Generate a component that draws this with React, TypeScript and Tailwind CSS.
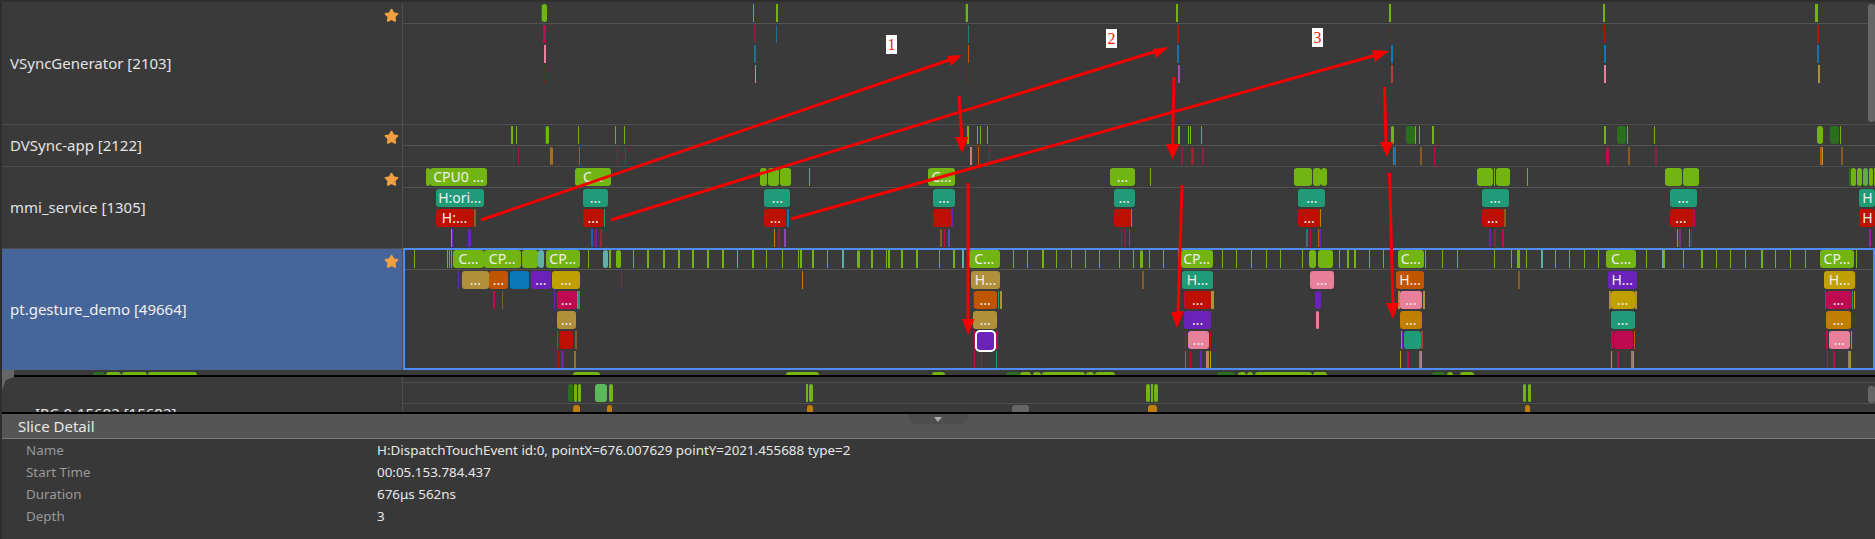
import { Star } from 'lucide-react';

type Slice = [number, number, string, string?];

const CANVAS_LEFT = 403;

const GREEN = '#72b512';
const DARK = '#2a6e1e';
const TEAL = '#1f9c77';
const RED = '#bd1000';
const CRIM = '#c00a50';
const PINK = '#e8809c';
const TAN = '#b0903a';
const ORANGE = '#c05500';
const OCHRE = '#c07f00';
const PURPLE = '#6a22b8';
const BLUE = '#0a78b8';
const YELLOW = '#c0a000';
const AQUA = '#5fb0a8';
const MAROON = '#8a1f4a';
const BROWN = '#8a5a20';

const vsync: Slice[][] = [
    [[540.6, 1, DARK], [542, 5, GREEN], [753, 1, GREEN], [776, 1.5, GREEN], [965, 1, DARK], [966, 2, GREEN], [1176, 2, GREEN], [1389, 2, GREEN], [1603, 2, GREEN], [1815, 2.5, GREEN]],
    [[543, 2.5, CRIM], [754, 1, MAROON], [776, 1, '#1f6f8f'], [968, 1, '#1f7f6f'], [1177, 1.5, RED], [1390.5, 1, '#8f1a10'], [1604, 1, RED], [1817, 2, RED]],
    [[544, 2, PINK], [754, 1.5, '#1f6f8f'], [968, 1, ORANGE], [1177, 2, BLUE], [1390.5, 2, BLUE], [1604, 2, BLUE], [1817, 2, BLUE]],
    [[544.7, 1, '#8f1a10'], [755, 1, PINK], [967, 1, '#7f1a10'], [1178, 2, '#a050b0'], [1391, 2, '#b04040'], [1604, 2, PINK], [1818, 1.5, TAN]],
];

const dvsync: Slice[][] = [
    [[511, 2, GREEN], [516, 1, GREEN], [545, 1, DARK], [546, 3, GREEN], [578, 1, GREEN], [615, 1, GREEN], [624, 1, GREEN], [967, 2, GREEN], [977, 1, GREEN], [979.5, 1, GREEN], [987, 1, GREEN], [1178, 2, GREEN], [1188, 1, GREEN], [1190, 1, GREEN], [1200.6, 1, GREEN], [1390.6, 3, GREEN], [1406, 9, DARK], [1415, 1, GREEN], [1419, 1, GREEN], [1432, 2, GREEN], [1604, 2, GREEN], [1617, 9, DARK], [1627, 1, GREEN], [1654, 1, GREEN], [1817, 6, GREEN], [1830, 9, DARK], [1840, 1, GREEN]],
    [[513, 1, MAROON], [518, 1, MAROON], [549.6, 3, '#b06a20'], [579, 1, ORANGE], [617, 1, MAROON], [625, 1, CRIM], [970, 2, '#d08070'], [978, 1, ORANGE], [988.5, 1, MAROON], [1180.6, 2, MAROON], [1191, 3, '#a02030'], [1202, 2, MAROON], [1392.5, 1, ORANGE], [1394, 1.5, BLUE], [1419.6, 2, BROWN], [1434, 1, CRIM], [1606, 3, CRIM], [1628, 2, BROWN], [1655, 1.5, MAROON], [1820, 2, ORANGE], [1822, 1, TAN], [1841, 1.5, BROWN]],
];

const mmi: Slice[][] = [
    [[425.5, 4, GREEN], [430, 57, GREEN, 'CPU0 ...'], [575, 36, GREEN, 'C...'], [760, 7, GREEN], [768, 11, GREEN], [779.5, 11.5, GREEN], [809, 1, GREEN], [928, 27, GREEN, 'C...'], [1110, 25, GREEN, '...'], [1150, 1, GREEN], [1294, 18, GREEN], [1312.5, 8, GREEN], [1321, 6, GREEN], [1477, 15.5, GREEN], [1493.5, 1, GREEN], [1495.5, 14, GREEN], [1526.5, 1, GREEN], [1664.5, 17, GREEN], [1682.5, 16, GREEN], [1849, 2, DARK], [1851, 5, GREEN], [1857, 4.5, GREEN], [1862.5, 5.5, '#5fae3a'], [1869, 4, GREEN], [1874, 1, GREEN]],
    [[435.5, 48.5, TEAL, 'H:ori...'], [582.6, 25.7, TEAL, '...'], [764.4, 26, TEAL, '...'], [933, 21.6, TEAL, '...'], [1113.7, 21, TEAL, '...'], [1298.3, 27, TEAL, '...'], [1481.7, 27, TEAL, '...'], [1669.5, 27.5, TEAL, '...'], [1859.4, 16, TEAL, 'H']],
    [[435.5, 38, RED, 'H:...'], [474, 2, BROWN], [582.6, 21, RED, '...'], [604, 1, TEAL], [764.4, 22, RED, '...'], [787, 1.5, BLUE], [933, 17.5, RED], [951, 1.5, PURPLE], [1113.7, 17, RED], [1131, 1, OCHRE], [1298.3, 21.5, RED, '...'], [1320, 1, OCHRE], [1482, 21.5, RED, '...'], [1504, 2, BROWN], [1669.5, 23, RED, '...'], [1693, 1.5, CRIM], [1859.4, 16, RED, 'H']],
    [[451, 1, TAN], [452, 1, PURPLE], [468, 3, PURPLE], [591, 2, '#1f5fb0'], [593.6, 2, MAROON], [596, 1, PURPLE], [600, 2, '#a02030'], [774, 1, OCHRE], [777.5, 2, MAROON], [784, 2, '#8a4ab0'], [940, 2, BROWN], [944, 1, CRIM], [948, 2, '#5a4ab0'], [1121, 1, CRIM], [1124, 2, MAROON], [1128.5, 1.5, '#6a4a90'], [1306, 2, '#3f6f7f'], [1309.5, 1, CRIM], [1317.5, 1, ORANGE], [1318.5, 2, PURPLE], [1489, 2, PURPLE], [1494, 2, MAROON], [1501.5, 2, CRIM], [1677, 1, TAN], [1679, 2, '#8a2a8a'], [1689, 1, OCHRE], [1691, 1, PURPLE], [1869, 2, '#9a1f9a']],
];

const tick = (x: number, w = 1, c = GREEN): Slice => [x, w, c];

const gesture: Slice[][] = [
    [
        tick(414), tick(447), tick(449), tick(451), [453, 31, GREEN, 'C...'], [484, 36.5, GREEN, 'CP...'], [522, 15.5, GREEN], [538, 6, AQUA], [545.5, 34.5, GREEN, 'CP...'],
        tick(587.5), [602.6, 5, AQUA], tick(609, 2), [615.7, 5, GREEN], tick(633),
        tick(647, 2), tick(662.5, 2), tick(678, 1.5), tick(692, 2), tick(707, 1.5), tick(721.6, 2), tick(736.7, 1.5, AQUA), tick(752, 1.5), tick(765.7, 1.5), tick(781.6, 1.5), tick(797.5), tick(800.3, 2),
        tick(812, 1.5), tick(826.5), tick(841.5, 2, AQUA), tick(857, 3), tick(871, 2), tick(885.6), tick(888, 1.5), tick(900.7, 2), tick(916, 2), tick(938.7), tick(953, 2), tick(961.5, 2, AQUA),
        [969, 30.6, GREEN, 'C...'], tick(1013), tick(1027), tick(1042, 1.5), tick(1056), tick(1071), tick(1085), tick(1099.4), tick(1118.6), tick(1133), tick(1140, 3), tick(1149), tick(1163), tick(1177.7),
        [1180.6, 32, GREEN, 'CP...'], tick(1222), tick(1236), tick(1251), tick(1266), tick(1280), tick(1302), [1308.7, 7.5, GREEN], [1318, 15.3, GREEN], tick(1339), tick(1346.5, 2), tick(1354, 1.5), tick(1369), tick(1383),
        [1397.5, 26.5, GREEN, 'C...'], tick(1425.4), tick(1442), tick(1457), tick(1494), tick(1510.7), tick(1517, 2.5), tick(1525.7, 1.5), tick(1541, 2, AQUA), tick(1555), tick(1569), tick(1583.5), tick(1598),
        [1606.4, 29.5, GREEN, 'C...'], tick(1646), tick(1662, 2, AQUA), tick(1664), tick(1682.6), tick(1701, 1.5), tick(1716), tick(1730.4), tick(1745), tick(1760.6, 2), tick(1775), tick(1790), tick(1805),
        [1820, 34, GREEN, 'CP...'], tick(1856),
    ],
    [[457.5, 1, PURPLE], [462, 27, TAN, '...'], [489, 19, ORANGE, '...'], [510.4, 18.5, BLUE], [531, 20, PURPLE, '...'], [552, 28, YELLOW, '...'], [621, 1, PURPLE], [802, 1, OCHRE], [971, 29, TAN, 'H...'], [1142, 1.5, BROWN], [1182, 31, TEAL, 'H...'], [1310, 24, PINK, '...'], [1396, 28, ORANGE, 'H...'], [1518, 2, BROWN], [1608, 28.5, PURPLE, 'H...'], [1824, 31, YELLOW, 'H...'], [1855, 1, PURPLE]],
    [[492.5, 2, CRIM], [502, 1, BROWN], [553.7, 1, PURPLE], [556.5, 20, CRIM, '...'], [576.5, 1.5, OCHRE], [578, 2, TEAL], [972.5, 1, CRIM], [973.7, 23, ORANGE, '...'], [998, 1, TEAL], [1000, 1.5, TAN], [1184, 1, CRIM], [1184.7, 26, RED, '...'], [1211, 2.5, TAN], [1315, 6, PURPLE], [1398, 2, TAN], [1400, 22, PINK, '...'], [1423, 2, TAN], [1609, 2, TAN], [1611, 23.5, YELLOW, '...'], [1635, 2, TAN], [1824.5, 1.5, '#1f6f7f'], [1826, 25, CRIM, '...'], [1851.7, 1, TEAL], [1854, 1, YELLOW]],
    [[557, 19, TAN, '...'], [973.3, 23.7, TAN, '...'], [1184.3, 26.5, PURPLE, '...'], [1315.6, 3, PINK], [1400, 22, OCHRE, '...'], [1610.6, 24, TEAL, '...'], [1825.7, 25, OCHRE, '...']],
    [[557.3, 1, '#a04030'], [559.4, 14, RED], [574.5, 2, BROWN], [973.7, 1, CRIM], [996, 2, CRIM], [1184.7, 1, PURPLE], [1188, 21, PINK, '...'], [1210, 1, RED], [1400.5, 1, TAN], [1401.7, 1, PURPLE], [1404, 16.5, TEAL], [1421, 2, '#a04030'], [1610.6, 2, CRIM], [1613.7, 19, CRIM], [1633.6, 1.5, ORANGE], [1826, 1.5, CRIM], [1828.8, 21, PINK, '...'], [1851, 1, TAN]],
    [[558, 1, RED], [561.4, 1.5, PURPLE], [563.4, 1, CRIM], [574, 2, '#8a7a20'], [974, 1, CRIM], [981, 1, CRIM], [996, 1, TEAL], [1184.7, 1.5, '#8a7a20'], [1190, 1, CRIM], [1200, 2, PURPLE], [1206, 1, '#d08070'], [1207, 2, TAN], [1209.6, 1, YELLOW], [1400, 1, YELLOW], [1406.6, 2, CRIM], [1419, 2, '#908070'], [1421, 1, TAN], [1611.4, 1, YELLOW], [1617, 2, CRIM], [1631, 2, '#908070'], [1633, 1, TAN], [1826.5, 1, PURPLE], [1833.4, 2, CRIM], [1848, 2, '#908070'], [1850, 1, TAN]],
];

const peek: Slice[] = [[494, 11.5, DARK], [507, 15, GREEN], [523, 24.5, GREEN], [549, 49, GREEN], [974, 27, GREEN], [1187, 33, GREEN], [1333, 13, GREEN], [1407, 13.5, DARK], [1421, 11, GREEN], [1434, 8, GREEN], [1443, 43, GREEN], [1487.4, 8, GREEN], [1496, 20, GREEN], [1617.5, 18.5, DARK], [1638.5, 8.5, GREEN], [1648, 6, GREEN], [1656, 57, GREEN], [1714, 14, GREEN], [1833, 13, DARK], [1847.5, 6.5, GREEN], [1860.5, 14.5, GREEN]];

const ipc: Slice[][] = [
    [[568, 5, DARK], [574, 3, GREEN], [578, 3, GREEN], [595.3, 12, '#5cb85c'], [608.7, 4, GREEN], [806, 2, GREEN], [809.3, 3.5, GREEN], [1146, 3.5, GREEN], [1151, 2, GREEN], [1153.7, 4, GREEN], [1523.4, 3, GREEN], [1528, 3, GREEN]],
    [[573, 7, OCHRE], [607, 4.5, OCHRE], [807, 6, OCHRE], [1012, 17, '#666666'], [1147.6, 9, OCHRE], [1525, 5, OCHRE]],
];

// small slices are hard bars, wide ones get rounded corners
function Bar({ s, top }: { s: Slice; top: number }) {
    const [x, w, color, text] = s;
    return (
        <div
            className={`absolute h-[18px] flex items-center justify-center overflow-hidden whitespace-nowrap text-[14px] leading-none text-[#eeeeee] ${w > 2.5 ? 'rounded-[3px]' : ''}`}
            style={{ left: x - CANVAS_LEFT, width: w, top, backgroundColor: color }}
        >
            {text}
        </div>
    );
}

// offsets are measured from inside the row's 1px top border
function laneTop(n: number) {
    return n === 0 ? 1 : 22 + (n - 1) * 20;
}

function Track({ name, height, lanes, selected }: { name: string; height: number; lanes: Slice[][]; selected?: boolean }) {
    return (
        <div className="flex shrink-0 border-t border-[#4e4e4e] first:border-t-transparent" style={{ height }}>
            <div className={`relative flex w-[401px] shrink-0 items-center border-r border-[#4e4e4e] pl-2 text-[15px] ${selected ? 'bg-[#46659a] text-[#f0f0f0]' : 'text-[#e4e4e4]'}`}>
                {name}
                <Star size={15} className="absolute right-[3px] top-[5px] fill-[#f0a040] text-[#f0a040]" />
            </div>
            <div className="relative flex-1">
                <div className="absolute inset-x-0 top-[20px] h-px bg-[#525252]" />
                {lanes.map((lane, i) => lane.map((s, j) => <Bar key={`${i}-${j}`} s={s} top={laneTop(i)} />))}
                {selected && (
                    <>
                        <div className="absolute left-[572px] top-[81px] h-[22px] w-[21px] rounded-[5px] border-2 border-white bg-[#6a22b8]" />
                        <div className="absolute inset-x-0 -top-px bottom-0 border-2 border-[#4f8cf5]" />
                    </>
                )}
            </div>
        </div>
    );
}

function Head({ tip, a, b }: { tip: string; a: string; b: string }) {
    return <polygon points={`${tip} ${a} ${b}`} fill="#f40000" />;
}

function Arrows() {
    return (
        <svg className="pointer-events-none absolute left-0 top-0" width={1875} height={414}>
            <g stroke="#f40000" strokeWidth={3} fill="none">
                <line x1={481} y1={220} x2={955} y2={58} />
                <line x1={611} y1={220} x2={1160} y2={50} />
                <line x1={791} y1={219} x2={1380} y2={54} />
                <line x1={959} y1={96} x2={962} y2={140} />
                <line x1={968} y1={183} x2={968} y2={322} />
                <line x1={1174} y1={77} x2={1172.5} y2={147} />
                <line x1={1182} y1={185} x2={1178} y2={314} />
                <line x1={1384.5} y1={87} x2={1386} y2={145} />
                <line x1={1389.5} y1={173} x2={1393} y2={305} />
            </g>
            <Head tip="962,55" a="947,56" b="951,66" />
            <Head tip="1169,47" a="1153,49" b="1156,58" />
            <Head tip="1389,51" a="1372,50" b="1375,62" />
            <Head tip="962,153" a="955,137" b="968.5,137" />
            <Head tip="968,335" a="962,319" b="974.5,319" />
            <Head tip="1172.5,160" a="1166,144" b="1179.5,144" />
            <Head tip="1177,328" a="1171,312" b="1184,311" />
            <Head tip="1387,157" a="1380,142" b="1393,142" />
            <Head tip="1393,319" a="1386,303" b="1399,303" />
        </svg>
    );
}

function Mark({ n, x, y }: { n: string; x: number; y: number }) {
    return (
        <div
            className="absolute flex h-[19px] w-[11px] items-center justify-center bg-white text-[16px] leading-none text-[#f02000] font-['Liberation_Serif',serif]"
            style={{ left: x, top: y }}
        >
            {n}
        </div>
    );
}

const details = [
    ['Name', 'H:DispatchTouchEvent id:0, pointX=676.007629 pointY=2021.455688 type=2'],
    ['Start Time', '00:05.153.784.437'],
    ['Duration', '676μs 562ns'],
    ['Depth', '3'],
];

export default function App() {
    return (
        <div className="relative flex h-[539px] w-[1875px] flex-col overflow-hidden bg-[#2e2e2e] pl-[2px] pt-[2px] font-['Noto_Sans',sans-serif]">
            <div className="flex h-[373px] shrink-0 flex-col overflow-hidden bg-[#3a3a3a]">
                <Track name="VSyncGenerator [2103]" height={122} lanes={vsync} />
                <Track name="DVSync-app [2122]" height={42} lanes={dvsync} />
                <Track name="mmi_service [1305]" height={82} lanes={mmi} />
                <Track name="pt.gesture_demo [49664]" height={122} lanes={gesture} selected />
                <div className="relative h-[5px] shrink-0">
                    {peek.map((s, i) => (
                        <Bar key={i} s={s} top={2} />
                    ))}
                </div>
            </div>
            <div className="h-[2px] shrink-0 bg-black" />
            <div className="relative flex h-[37px] shrink-0 overflow-hidden border-b-[2px] border-black bg-[#3a3a3a]">
                <div className="w-[401px] shrink-0 border-r border-[#4e4e4e] pl-[33px] pt-[27px] text-[15px] leading-[18px] text-[#e4e4e4]">IPC-0-15682 [15682]</div>
                <div className="relative flex-1">
                    <div className="absolute inset-x-0 top-[5px] h-px bg-[#4e4e4e]" />
                    <div className="absolute inset-x-0 top-[26px] h-px bg-[#4e4e4e]" />
                    {ipc[0].map((s, i) => (
                        <Bar key={i} s={s} top={7} />
                    ))}
                    {ipc[1].map((s, i) => (
                        <Bar key={i} s={s} top={28} />
                    ))}
                </div>
                <div className="absolute right-0 top-[9px] h-[17px] w-[7px] rounded-[3px] bg-[#666666]" />
            </div>
            <div className="relative flex h-[25px] shrink-0 items-center border-b border-[#7a7a7a] bg-[#555555] pl-4 text-[15px] text-[#e8e8e8]">
                Slice Detail
                <div className="absolute left-[906px] top-0 flex h-[10px] w-[60px] justify-center rounded-b-[8px] bg-[#4e4e4e]">
                    <svg width="8" height="5" className="mt-[3px]">
                        <polygon points="0,0 8,0 4,5" fill="#aaaaaa" />
                    </svg>
                </div>
            </div>
            <div className="flex flex-1 flex-col bg-[#383838]">
                {details.map(([k, v]) => (
                    <div key={k} className="flex h-[22px] shrink-0 items-center text-[13.4px]">
                        <div className="w-[375px] shrink-0 pl-[24px] text-[#9a9a9a]">{k}</div>
                        <div className="text-[#e8e8e8]">{v}</div>
                    </div>
                ))}
            </div>

            {/* overlays: scrollbar, splitter tab, hand drawn annotations */}
            <div className="absolute right-0 top-[4px] h-[118px] w-[7px] rounded-[3px] bg-[#666666]" />
            <svg className="absolute left-[2px] top-[370px]" width="12" height="20">
                <polygon points="0,0 12,0 12,7 4,10 0,20" fill="#666666" />
            </svg>
            <Arrows />
            <Mark n="1" x={886} y={35} />
            <Mark n="2" x={1106} y={29} />
            <Mark n="3" x={1312} y={28} />
        </div>
    );
}
